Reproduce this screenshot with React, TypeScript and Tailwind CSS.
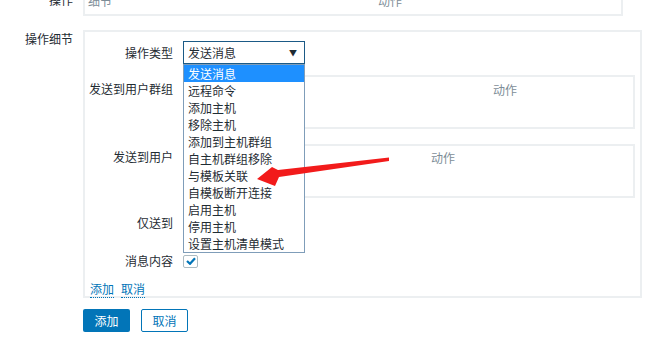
import React from "react";

const font = { fontFamily: '"Noto Sans CJK SC", "Noto Sans", sans-serif' };

const options = [
  "发送消息",
  "远程命令",
  "添加主机",
  "移除主机",
  "添加到主机群组",
  "自主机群组移除",
  "与模板关联",
  "自模板断开连接",
  "启用主机",
  "停用主机",
  "设置主机清单模式",
];

const Label: React.FC<{ children: React.ReactNode; className?: string }> = ({ children, className }) => (
  <div className={"w-[85px] shrink-0 text-right text-[12px] text-[#1f2c33] " + (className ?? "")}>{children}</div>
);

const App: React.FC = () => {
  return (
    <div className="relative h-[346px] w-[662px] overflow-hidden bg-white text-[12px] text-[#1f2c33]" style={font}>
      {/* previous section, cut off at the top */}
      <div className="mt-[-16px] flex gap-[10px]">
        <div className="w-[73px] shrink-0 pt-[8px] text-right leading-[16px]">操作</div>
        <div className="relative h-[32px] w-[540px] border-2 border-[#eceff1] bg-white">
          <span className="absolute left-[3px] top-[7px] leading-[16px] text-[#7d8d97]">细节</span>
          <span className="absolute left-[293px] top-[7px] leading-[16px] text-[#7d8d97]">动作</span>
        </div>
      </div>

      <div className="mt-[14px] flex gap-[10px]">
        <div className="w-[73px] shrink-0 pt-[1px] text-right leading-[16px]">操作细节</div>
        <div className="relative h-[268px] w-[559px] border-2 border-[#eceff1] pl-[3px] pt-[9px]">
          {/* 操作类型 */}
          <div className="flex items-center gap-[10px]">
            <Label>操作类型</Label>
            <div className="flex h-[23px] w-[122px] items-center justify-between border border-[#1b5a86] bg-white pl-[4px] pr-[7px]">
              <span>发送消息</span>
              <span className="text-[8px]">▼</span>
            </div>
          </div>

          {/* 发送到用户群组 */}
          <div className="mt-[11px] flex gap-[10px]">
            <Label className="pt-[5px]">发送到用户群组</Label>
            <div className="h-[54px] w-[452px] border-2 border-[#eceff1] pl-[308px] pt-[4px] text-[#7d8d97]">动作</div>
          </div>

          {/* 发送到用户 */}
          <div className="mt-[15px] flex gap-[10px]">
            <Label className="pt-[4px]">发送到用户</Label>
            <div className="h-[54px] w-[452px] border-2 border-[#eceff1] pl-[246px] pt-[3px] text-[#7d8d97]">动作</div>
          </div>

          {/* 仅送到 */}
          <div className="mt-[13px] flex h-[23px] items-center gap-[10px]">
            <Label>仅送到</Label>
          </div>

          {/* 消息内容 */}
          <div className="mt-[18px] flex items-center gap-[10px]">
            <Label>消息内容</Label>
            <div className="flex h-[13px] w-[15px] items-center justify-center rounded-[2px] border border-[#acbbc2] bg-white">
              <svg width="10" height="8" viewBox="0 0 10 8">
                <path d="M1 4 L4 6.8 L9 1.2" fill="none" stroke="#0275b8" strokeWidth="2.2" />
              </svg>
            </div>
          </div>

          {/* links */}
          <div className="mt-[11px] flex gap-[7px] pl-[2px] leading-[16px] text-[#0275b8]">
            <span className="border-b border-dotted border-[#0275b8]">添加</span>
            <span className="border-b border-dotted border-[#0275b8]">取消</span>
          </div>

          {/* open dropdown list */}
          <div className="absolute left-[98px] top-[32px] w-[122px] border border-[#7f9db9] bg-white">
            {options.map((o, i) => (
              <div
                key={o}
                className={
                  "h-[17px] pl-[4px] text-[12px] leading-[17px] " +
                  (i === 0 ? "bg-[#1e90ff] text-white" : "text-[#1f2c33]")
                }
              >
                {o}
              </div>
            ))}
          </div>
        </div>
      </div>

      {/* buttons */}
      <div className="mt-[11px] flex gap-[11px] pl-[83px]">
        <button className="h-[23px] w-[47px] rounded-[2px] bg-[#0275b8] text-[12px] text-white">添加</button>
        <button className="h-[23px] w-[47px] rounded-[2px] border border-[#0275b8] bg-white text-[12px] text-[#0275b8]">取消</button>
      </div>

      {/* red annotation arrow */}
      <svg className="absolute left-0 top-0" width="662" height="346" viewBox="0 0 662 346">
        <polygon points="389,157.5 389,161 279,177 275,186 257,179 272,167 278,170" fill="#f21b1b" />
      </svg>
    </div>
  );
};

export default App;
